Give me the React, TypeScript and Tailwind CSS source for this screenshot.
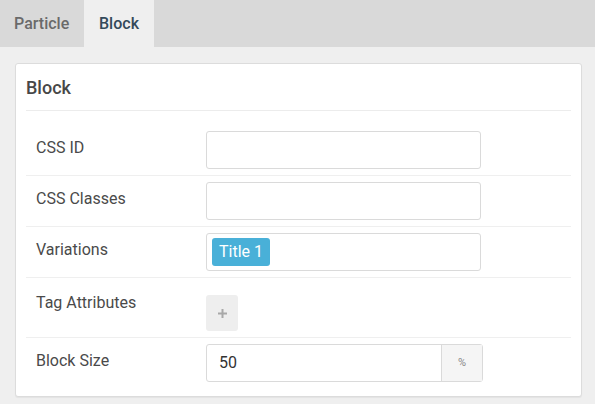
import React from 'react';

const FieldRow: React.FC<{ label: string; last?: boolean; top?: boolean; children: React.ReactNode }> = ({ label, last, top, children }) => {
  return (
    <div className={`flex py-[6px] ${last ? '' : 'border-b border-[#efefef]'}`}>
      <div className={`w-[180px] shrink-0 pl-[10px] text-[16px] text-[#4a4a4a] ${top ? 'pt-[7px]' : 'h-[38px] flex items-center -mt-[2px]'}`}>
        {label}
      </div>
      {children}
    </div>
  );
};

const TextInput: React.FC<{ children?: React.ReactNode }> = ({ children }) => (
  <div className="w-[275px] h-[38px] border border-[#dadada] rounded-[3px] bg-white flex items-center px-[5px]">{children}</div>
);

export default function App() {
  return (
    <div className="w-[595px] h-[404px] bg-[#efefef] overflow-hidden" style={{ fontFamily: 'Roboto, "Liberation Sans", sans-serif' }}>
      {/* tabs */}
      <div className="h-[47px] bg-[#d9d9d9] flex text-[16px] font-medium">
        <div className="w-[84px] flex items-center pl-[14px] text-[#6a6a6a]">Particle</div>
        <div className="w-[70px] flex items-center justify-center bg-[#efefef] text-[#33495a]">Block</div>
      </div>

      <div className="mt-[16px] ml-[15px] w-[567px] bg-white border border-[#dcdcdc] rounded-[3px] shadow-[0_1px_1px_rgba(0,0,0,0.05)] pb-[8px]">
        <div className="mx-[10px] h-[47px] flex items-center border-b border-[#ececec] text-[18px] font-medium text-[#474747]">
          Block
        </div>
        <div className="mx-[10px] pt-[14px]">
          <FieldRow label="CSS ID">
            <TextInput />
          </FieldRow>
          <FieldRow label="CSS Classes">
            <TextInput />
          </FieldRow>
          <FieldRow label="Variations">
            <TextInput>
              <span className="h-[28px] px-[7px] rounded-[3px] bg-[#49b0d8] text-white text-[16px] flex items-center">Title 1</span>
            </TextInput>
          </FieldRow>
          <FieldRow label="Tag Attributes" top>
            <div className="mt-[11px] w-[32px] h-[36px] rounded-[3px] bg-[#eeeeee] flex items-center justify-center">
              <svg width="9" height="9" viewBox="0 0 9 9">
                <path d="M3.5 0h2v3.5H9v2H5.5V9h-2V5.5H0v-2h3.5z" fill="#a8a8a8" />
              </svg>
            </div>
          </FieldRow>
          <FieldRow label="Block Size" last>
            <div className="w-[277px] h-[38px] border border-[#dadada] rounded-[3px] bg-white flex">
              <div className="flex-1 flex items-center pl-[12px] text-[16px] text-[#333]">50</div>
              <div className="w-[41px] border-l border-[#dadada] bg-[#f5f5f5] flex items-center justify-center text-[11px] text-[#888]">%</div>
            </div>
          </FieldRow>
        </div>
      </div>
    </div>
  );
}
